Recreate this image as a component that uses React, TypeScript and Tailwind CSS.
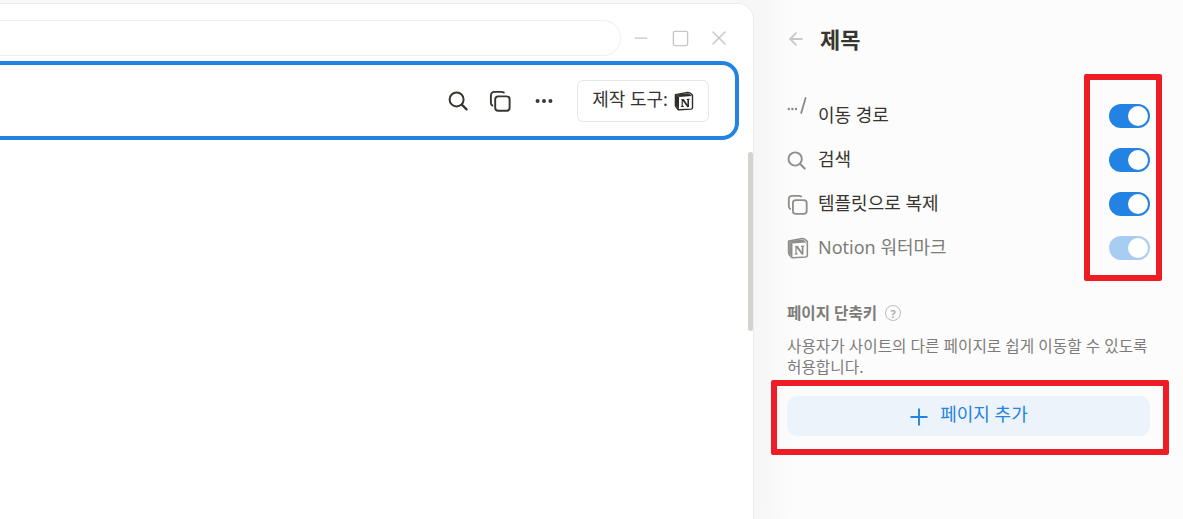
import React from 'react';
import { ArrowLeft, Minus, Square, X, MoreHorizontal } from 'lucide-react';

const NotionLogo: React.FC<{ color: string; size: number }> = ({ color, size }) => (
  <svg width={size} height={size} viewBox="0 0 20 20" fill="none">
    <path
      d="M1.6 3.6 L13.6 1.4 C14.4 1.3 15 1.4 15.6 1.8 L18 3.6 C18.4 3.9 18.5 4.1 18.5 4.6 V16.6 C18.5 17.5 18.1 18 17.2 18.1 L5.2 18.8 C4.6 18.8 4.2 18.7 3.8 18.2 L1.8 15.6 C1.5 15.2 1.4 14.9 1.4 14.4 V4.4 C1.4 4 1.4 3.8 1.6 3.6 Z"
      fill="white"
      stroke={color}
      strokeWidth="1.4"
      strokeLinejoin="round"
    />
    <path d="M2 3.8 L5 5.9 L17.8 5 L15 2.4 L13.6 2.2 L3 3.4 Z" fill={color} />
    <path d="M5 5.9 V18.4 L2 15 V3.8 Z" fill={color} />
    <path
      d="M7.2 8.2 L9.8 8 L13.4 13.4 V9 L12.6 8.8 V8 L15.8 7.8 V8.6 L15 8.8 V16 L13.4 16.2 L8.8 10 V14.8 L9.8 15.1 V15.9 L6.9 16.1 V15.3 L7.6 15.1 V9 L7.2 8.9 Z"
      fill={color}
    />
  </svg>
);

const SearchGlyph: React.FC<{ size: number; className?: string }> = ({ size, className }) => (
  <svg width={size} height={size} viewBox="0 0 20 20" fill="none" stroke="currentColor" className={className}>
    <circle cx="8.6" cy="8.4" r="7" strokeWidth="2" />
    <path d="M13.8 13.6 L18.6 18.4" strokeWidth="2.2" strokeLinecap="round" />
  </svg>
);

const CopyGlyph: React.FC<{ size: number; className?: string }> = ({ size, className }) => (
  <svg width={size} height={size} viewBox="0 0 22 22" fill="none" stroke="currentColor" strokeWidth="1.9" className={className}>
    <rect x="6.2" y="6.4" width="14.4" height="14.4" rx="3" />
    <path d="M14.8 2.6 C14 2 13.4 1.9 12.6 1.9 H5.4 C3.2 1.9 1.9 3.2 1.9 5.4 V12.8 C1.9 14 2.4 15 3.4 15.6" strokeLinecap="round" />
  </svg>
);

const Toggle: React.FC<{ muted?: boolean }> = ({ muted }) => (
  <div
    className={`flex h-6 w-[41px] items-center justify-end rounded-full pr-[2px] ${muted ? 'bg-[#a7cdf3]' : 'bg-[#2383e2]'}`}
  >
    <div className="h-[20px] w-[20px] rounded-full bg-white" />
  </div>
);

const rows = [
  { label: '이동 경로', icon: 'path' },
  { label: '검색', icon: 'search' },
  { label: '템플릿으로 복제', icon: 'copy' },
  { label: 'Notion 워터마크', icon: 'notion', muted: true },
];

const RowIcon: React.FC<{ icon: string }> = ({ icon }) => {
  if (icon === 'path') {
    return (
      <svg width="22" height="22" viewBox="0 0 22 22" fill="none" className="-mt-[18px]">
        <circle cx="1.8" cy="13" r="1.2" fill="#8a8986" />
        <circle cx="5.4" cy="13" r="1.2" fill="#8a8986" />
        <circle cx="9" cy="13" r="1.2" fill="#8a8986" />
        <path d="M18.6 2 L14.2 17" stroke="#8a8986" strokeWidth="1.8" strokeLinecap="round" />
      </svg>
    );
  }
  if (icon === 'search') return <SearchGlyph size={19} className="text-[#8f8e8b]" />;
  if (icon === 'copy') return <CopyGlyph size={21} className="text-[#8f8e8b]" />;
  return <NotionLogo color="#8f8e8b" size={22} />;
};

export default function App() {
  return (
    <div
      className="relative flex h-[519px] w-[1183px] overflow-hidden bg-[#f7f7f7] text-[#37352f]"
      style={{ fontFamily: '"Noto Sans", "Noto Sans CJK KR", sans-serif' }}
    >
      <div className="w-[754px] shrink-0 pt-[3px]">
        <div className="h-[560px] rounded-tr-[16px] border-t border-r border-[#ececec] bg-white">
          <div className="flex h-[57px] items-center pt-[11px]">
            <div className="h-[36px] w-[621px] rounded-r-full border border-l-0 border-[#efefee] bg-white" />
            <div className="ml-[10px] flex items-center gap-[19px] text-[#c6c6c4]">
              <div className="flex h-5 w-5 items-center justify-center">
                <Minus size={20} strokeWidth={1.5} className="shrink-0" />
              </div>
              <div className="flex h-5 w-5 items-center justify-center">
                <Square size={19} strokeWidth={1.7} className="shrink-0" />
              </div>
              <div className="flex h-5 w-5 items-center justify-center">
                <X size={24} strokeWidth={1.4} className="shrink-0" />
              </div>
            </div>
          </div>
          <div className="flex h-[79px] w-[739px] items-center justify-end rounded-r-[17px] border-[4px] border-l-0 border-[#2383e2] pr-[26px]">
            <SearchGlyph size={20} className="text-[#37352f]" />
            <CopyGlyph size={22} className="ml-[21px] text-[#37352f]" />
            <MoreHorizontal size={22} strokeWidth={2.4} className="ml-[22px] text-[#37352f]" />
            <div className="ml-[22px] flex h-[42px] w-[132px] items-center justify-center gap-[6px] rounded-[6px] border border-[#e6e6e5] text-[18px]">
              <span className="-mt-[3px]">제작 도구:</span>
              <NotionLogo color="#2f2e2b" size={20} />
            </div>
          </div>
          <div className="mt-[12px] ml-[748px] h-[179px] w-[5px] rounded-full bg-[#d4d4cf]" />
        </div>
      </div>

      <div className="flex-1 bg-linear-to-r from-[#f6f6f6] to-[#fcfcfc] to-[40px] pl-[33px] pr-[33px]">
        <div className="flex h-[78px] items-center">
          <ArrowLeft size={20} strokeWidth={2.2} className="-ml-[1px] text-[#c9c9c7]" />
          <h1 className="ml-[14px] text-[22px] font-bold leading-none">제목</h1>
        </div>
        <div className="mt-[26px] flex flex-col gap-[20px]">
          {rows.map((row) => (
            <div key={row.label} className="flex h-6 items-center justify-between">
              <div className="flex items-center">
                <div className="flex w-[31px] items-center">
                  <RowIcon icon={row.icon} />
                </div>
                <span className={`-mt-[2px] text-[18px] leading-6 ${row.muted ? 'text-[#7d7c78]' : ''}`}>{row.label}</span>
              </div>
              <Toggle muted={row.muted} />
            </div>
          ))}
        </div>
        <div className="mt-[43px] flex items-center gap-[8px]">
          <span className="text-[15.6px] font-bold leading-5 text-[#7d7c78]">페이지 단축키</span>
          <div className="flex h-4 w-4 items-center justify-center rounded-full border border-[#bdbdbb] text-[11px] font-bold leading-none text-[#adadab]">
            ?
          </div>
        </div>
        <p className="mt-[13px] text-[15.7px] leading-[21px] text-[#7d7c78]">
          사용자가 사이트의 다른 페이지로 쉽게 이동할 수 있도록 허용합니다.
        </p>
        <button className="mt-[18px] flex h-[40px] w-full items-center justify-center gap-[11px] rounded-[10px] bg-[#edf3fb] text-[18px] text-[#2383e2]">
          <svg width="20" height="20" viewBox="0 0 20 20" stroke="currentColor" strokeWidth="1.9" className="mt-[2px]">
            <path d="M10 1.5 V18.5 M1.5 10 H18.5" />
          </svg>
          <span className="-mt-[3px]">페이지 추가</span>
        </button>
      </div>

      <div className="absolute left-[1084px] top-[74px] h-[207px] w-[78px] rounded-[2px] border-[6px] border-[#ee1c25]" />
      <div className="absolute left-[771px] top-[380px] h-[75px] w-[398px] rounded-[2px] border-[6px] border-[#ee1c25]" />
    </div>
  );
}
